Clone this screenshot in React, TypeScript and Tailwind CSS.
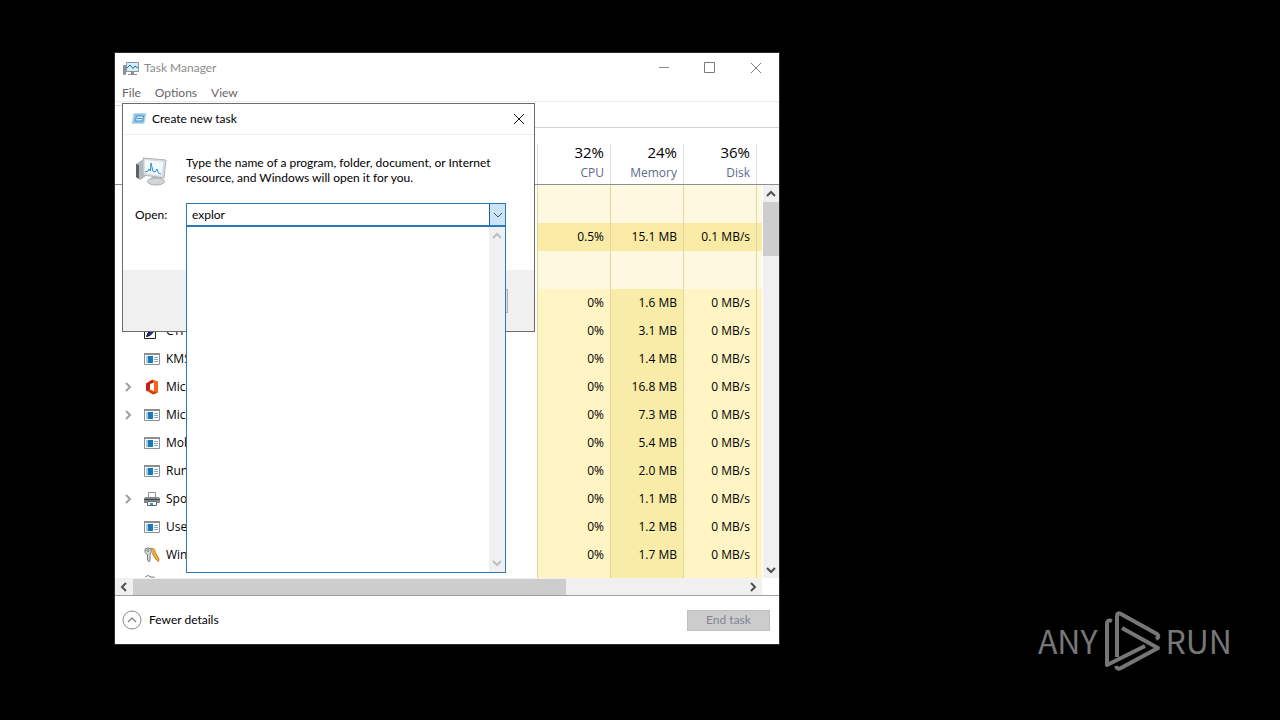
import React from 'react';
import { clsx } from 'clsx';

type IconKind = 'ctf' | 'app' | 'office' | 'printer' | 'keys' | 'keysTop' | 'none';

interface Process {
  name: string;
  icon: IconKind;
  expandable?: boolean;
  cpu: string;
  memory: string;
  disk: string;
}

const processes: Process[] = [
  { name: '', icon: 'none', cpu: '0%', memory: '1.6 MB', disk: '0 MB/s' },
  { name: 'CTF', icon: 'ctf', cpu: '0%', memory: '3.1 MB', disk: '0 MB/s' },
  { name: 'KMS', icon: 'app', cpu: '0%', memory: '1.4 MB', disk: '0 MB/s' },
  { name: 'Mic', icon: 'office', expandable: true, cpu: '0%', memory: '16.8 MB', disk: '0 MB/s' },
  { name: 'Mic', icon: 'app', expandable: true, cpu: '0%', memory: '7.3 MB', disk: '0 MB/s' },
  { name: 'Mob', icon: 'app', cpu: '0%', memory: '5.4 MB', disk: '0 MB/s' },
  { name: 'Run', icon: 'app', cpu: '0%', memory: '2.0 MB', disk: '0 MB/s' },
  { name: 'Spo', icon: 'printer', expandable: true, cpu: '0%', memory: '1.1 MB', disk: '0 MB/s' },
  { name: 'Use', icon: 'app', cpu: '0%', memory: '1.2 MB', disk: '0 MB/s' },
  { name: 'Win', icon: 'keys', cpu: '0%', memory: '1.7 MB', disk: '0 MB/s' },
  { name: '', icon: 'keysTop', cpu: '', memory: '', disk: '' },
];

const columns = [
  { label: 'CPU', value: '32%' },
  { label: 'Memory', value: '24%' },
  { label: 'Disk', value: '36%' },
];

const chevronPaths = {
  up: 'M1 7 L5 3 L9 7',
  down: 'M1 3 L5 7 L9 3',
  left: 'M7 1 L3 5 L7 9',
  right: 'M3 1 L7 5 L3 9',
};

const Chevron: React.FC<{ dir: keyof typeof chevronPaths; color?: string; width?: number }> = ({
  dir,
  color = '#505050',
  width = 2,
}) => (
  <svg width="10" height="10" viewBox="0 0 10 10" fill="none" stroke={color} strokeWidth={width}>
    <path d={chevronPaths[dir]} />
  </svg>
);

const ProcessIcon: React.FC<{ kind: IconKind }> = ({ kind }) => {
  switch (kind) {
    case 'app':
      return (
        <svg width="16" height="16" viewBox="0 0 16 16">
          <path d="M0.5 2.5h15v11h-15z" fill="#fff" stroke="#8a8f94" />
          <path d="M0 2h16v2H0z" fill="#8a8f94" />
          <path d="M2 5h2v7H2z" fill="#a9cbe4" />
          <path d="M4 5h5v7H4z" fill="#1979b8" />
          <path d="M10 6h4v1h-4zM10 8h4v1h-4zM10 10h4v1h-4z" fill="#7fa6c4" />
        </svg>
      );
    case 'office':
      return (
        <svg width="16" height="16" viewBox="0 0 16 16">
          <path d="M2 4.5 L8.5 0.5 L10 3.5 L6 5 V10.5 L4 12.5 L2 11.5 Z" fill="#c8200c" />
          <path d="M8.5 0.5 L14 2.5 V13.5 L9 15.5 L10 12.5 V3.5 Z" fill="#f5631a" />
          <path d="M4 12.5 L6 10.5 L10 12.5 L13.5 13.5 L9 15.5 Z" fill="#d83b01" />
        </svg>
      );
    case 'printer':
      return (
        <svg width="16" height="16" viewBox="0 0 16 16">
          <path d="M4.5 1.5h7v5h-7z" fill="#fff" stroke="#8d9196" />
          <path d="M1 6h14l1 2v4H0V8z" fill="#858a8f" />
          <path d="M0 8h16v1H0z" fill="#3e4347" />
          <path d="M3.5 10.5h9v4h-9z" fill="#f4f6f8" stroke="#666" />
          <path d="M6 12h3v2H6z" fill="#3c93bc" />
          <path d="M13 7h1v1h-1z" fill="#6fe08a" />
        </svg>
      );
    case 'keys':
      return (
        <svg width="16" height="16" viewBox="0 0 16 16" fill="none">
          <path d="M7 1.5 Q11 1 11 5 L15 12 L14.5 14.5 L12.5 13 L8 6" fill="#f0b03c" stroke="#c47a1c" />
          <path d="M1 2 Q4 -0.5 7 2 Q8 5 6 7.5 V13 L5 15 L3.5 13 V8 Q0 6 1 2 Z" fill="#d3d8dd" stroke="#7d8185" />
          <circle cx="4" cy="3.5" r="1" fill="#fff" stroke="#777" />
        </svg>
      );
    case 'keysTop':
      return (
        <svg width="16" height="16" viewBox="0 0 16 16" fill="none">
          <path d="M1 2 Q4 -1 7 2 M6 2h4v2H6" stroke="#8d8474" />
        </svg>
      );
    case 'ctf':
      return (
        <svg width="16" height="16" viewBox="0 0 16 16">
          <path d="M0.5 2.5h11v13h-11z" fill="#fff" stroke="#222" />
          <path d="M2.5 13.5 L4 10 L13 2 L12 6 L6 12.5 Z" fill="#22309a" stroke="#111" />
        </svg>
      );
    default:
      return null;
  }
};

const MonitorIcon: React.FC<{ size: number }> = ({ size }) => (
  <svg width={size} height={size} viewBox="0 0 32 32">
    <path d="M1 9 L7 5 L10 6 V22 L5 25 L1 22 Z" fill="#b5b9bc" />
    <path d="M1 9 L4 10 V24 L1 22 Z" fill="#5d6266" />
    <path d="M8 3 L31 5 L29 23 L8 20 Z" fill="#dcdee0" stroke="#b0b3b6" />
    <path d="M10 5 L28 7 L26.5 20.5 L10 18 Z" fill="#f2faff" />
    <path
      d="M10 17 L13 16 L14 14 L15.5 16 L16 8 L18 16.5 L20 17 L22 14 L23.5 18 L26 19"
      fill="none"
      stroke="#2b8fce"
    />
    <path d="M17 21 L24 22 L23 26 L16 25 Z" fill="#b7bbbf" />
    <ellipse cx="21" cy="26.5" rx="8.5" ry="3.5" fill="#d3d6d9" stroke="#a8acb0" />
  </svg>
);

const TitleIcon = () => (
  <svg width="16" height="16" viewBox="0 0 16 16">
    <path d="M0.5 5.5h2v9h-2z" fill="#8a9096" stroke="#8a9096" />
    <path d="M3.5 2.5h12v9h-12z" fill="#d6edfa" stroke="#8796a2" />
    <path d="M4 8 L7 5 L10 8.5 L12 6 L15 8" fill="none" stroke="#1d6fa5" />
    <path d="M8 12h3v2H8zM5 14h9v1H5z" fill="#8a9096" />
  </svg>
);

const RunIcon = () => (
  <svg width="16" height="16" viewBox="0 0 16 16">
    <path d="M3 2.5 H15 L13 12.5 H1 Z" fill="#8cc4ea" stroke="#b7dbf2" />
    <path d="M5.5 5 H12.5 L11.5 10 H4.5 Z" fill="#d9effc" stroke="#4a92c6" />
    <path d="M6 7.5h5" stroke="#4a92c6" />
  </svg>
);

const CloseIcon: React.FC<{ color: string }> = ({ color }) => (
  <svg width="10" height="10" viewBox="0 0 10 10" stroke={color}>
    <path d="M0 0 L10 10 M10 0 L0 10" />
  </svg>
);

const valueCell = 'border-l border-[#e0d79c] p-0 pr-1.5 text-right';

const GroupRow = () => (
  <tr className="h-[38px] bg-[#fff8e1]">
    <td className="bg-white p-0" />
    <td className={valueCell} />
    <td className={valueCell} />
    <td className={valueCell} />
    <td className="border-l border-[#e0d79c] p-0" />
  </tr>
);

const ProcessTable = () => (
  <table className="w-full table-fixed border-separate border-spacing-0 font-['Open_Sans',sans-serif]">
    <colgroup>
      <col />
      <col className="w-[73px]" />
      <col className="w-[73px]" />
      <col className="w-[73px]" />
      <col className="w-[6px]" />
    </colgroup>
    <tbody>
      <GroupRow />
      <tr className="h-7 bg-[#f9eba6]">
        <td className="bg-white p-0" />
        <td className={valueCell}>0.5%</td>
        <td className={valueCell}>15.1 MB</td>
        <td className={valueCell}>0.1 MB/s</td>
        <td className="border-l border-[#e0d79c] p-0" />
      </tr>
      <GroupRow />
      {processes.map((process, index) => (
        <tr key={index} className="h-7 bg-[#fff4c4]">
          <td className="bg-white p-0">
            <div className="flex items-center pl-2">
              <span className="w-[21px]">
                {process.expandable && <Chevron dir="right" color="#a0a0a0" />}
              </span>
              <span className="w-[22px]">
                <ProcessIcon kind={process.icon} />
              </span>
              <span>{process.name}</span>
            </div>
          </td>
          <td className={valueCell}>{process.cpu}</td>
          <td className={clsx(valueCell, 'bg-[#f9eca8]')}>{process.memory}</td>
          <td className={valueCell}>{process.disk}</td>
          <td className="border-l border-[#e0d79c] p-0" />
        </tr>
      ))}
    </tbody>
  </table>
);

const TaskManager = () => (
  <section className="absolute top-[53px] left-[115px] w-[664px] bg-white outline outline-[#2b2b2b]">
    <header className="flex h-[30px] items-center pl-2 text-[#8c8c8c]">
      <TitleIcon />
      <h1 className="flex-1 pl-[5px]">Task Manager</h1>
      <button aria-label="Minimize" className="flex h-full w-[46px] items-center justify-center">
        <svg width="10" height="10" viewBox="0 0 10 10">
          <path d="M0 4h10v1H0z" fill="#8c8c8c" />
        </svg>
      </button>
      <button aria-label="Maximize" className="flex h-full w-[46px] items-center justify-center">
        <svg width="12" height="12" viewBox="0 0 12 12" fill="none" stroke="#7c7c7c">
          <path d="M0.5 0.5h10v10h-10z" />
        </svg>
      </button>
      <button aria-label="Close" className="flex h-full w-[46px] items-center justify-center">
        <CloseIcon color="#7c7c7c" />
      </button>
    </header>

    <nav className="flex h-[18px] items-end gap-3.5 pl-[7px] text-[#666666]">
      <button>File</button>
      <button>Options</button>
      <button>View</button>
    </nav>

    <div className="flex h-[27px] items-end border-y border-t-[#ececec] border-b-[#d4d4d4]">
      <div className="-mb-px h-[23px] w-16 border-t border-[#dcdcdc] bg-white" />
    </div>

    <div className="flex h-[57px] items-end justify-end border-b border-[#8f8f8f] pr-4 font-['Open_Sans',sans-serif]">
      {columns.map((column) => (
        <div
          key={column.label}
          className="flex h-10 w-[73px] flex-col items-end border-l border-[#dcdfe4] pr-1.5"
        >
          <span className="text-[15px] leading-4 text-black">{column.value}</span>
          <span className="pt-[5px] text-[#5c6b8c]">{column.label}</span>
        </div>
      ))}
      <div className="h-10 w-[7px] border-l border-[#dcdfe4]" />
    </div>

    <div className="flex h-[393px]">
      <div className="mr-px h-full flex-1 overflow-hidden">
        <ProcessTable />
      </div>
      <div className="flex w-4 flex-col items-center bg-[#f0f0f0]">
        <button aria-label="Scroll up" className="flex h-[17px] items-center">
          <Chevron dir="up" />
        </button>
        <div className="h-[54px] w-full bg-[#cdcdcd]" />
        <div className="flex-1" />
        <button aria-label="Scroll down" className="flex h-[17px] items-center">
          <Chevron dir="down" />
        </button>
      </div>
    </div>

    <div className="border-b border-[#a0a0a0] pr-[17px]">
      <div className="flex h-[17px] items-center bg-[#f0f0f0]">
        <button aria-label="Scroll left" className="flex w-[18px] justify-center">
          <Chevron dir="left" />
        </button>
        <div className="h-4 w-[433px] bg-[#cdcdcd]" />
        <div className="flex-1" />
        <button aria-label="Scroll right" className="flex w-[18px] justify-center">
          <Chevron dir="right" />
        </button>
      </div>
    </div>

    <footer className="flex h-12 items-center justify-between pr-[9px] pl-[7px]">
      <button className="flex items-center gap-[7px]">
        <svg width="20" height="20" viewBox="0 0 20 20" fill="none" stroke="#8a8a8a">
          <circle cx="10" cy="10" r="9" />
          <path d="M6 12 L10 8 L14 12" strokeWidth="1.5" />
        </svg>
        Fewer details
      </button>
      <button disabled className="h-[21px] w-[83px] border border-[#bfbfbf] bg-[#cccccc] text-[#838393]">
        End task
      </button>
    </footer>
  </section>
);

const CreateTaskDialog = () => (
  <section className="absolute top-[103px] left-[122px] w-[413px] border border-[#6b6b6b] bg-white">
    <header className="flex h-[31px] items-center border-b border-[#ededed] pl-2">
      <RunIcon />
      <h2 className="flex-1 pl-[5px]">Create new task</h2>
      <button aria-label="Close dialog" className="flex h-full w-[31px] items-center justify-center">
        <CloseIcon color="#111111" />
      </button>
    </header>

    <div className="h-[135px] px-3">
      <div className="flex pt-5">
        <div className="w-[51px]">
          <MonitorIcon size={32} />
        </div>
        <p className="leading-[15px]">
          Type the name of a program, folder, document, or Internet
          <br />
          resource, and Windows will open it for you.
        </p>
      </div>
      <div className="flex items-center pt-4">
        <label htmlFor="open" className="w-[51px]">
          Open:
        </label>
        <div className="relative w-80">
          <div className="flex h-6 border border-[#2a7ab8]">
            <input id="open" type="text" defaultValue="explor" className="min-w-0 flex-1 px-[5px] outline-none" />
            <button
              aria-label="Show history"
              className="flex w-4 items-center justify-center border-l border-[#1f5f96] bg-[#cce4f7]"
            >
              <Chevron dir="down" width={1} />
            </button>
          </div>
          <div className="absolute top-[22px] left-0 flex h-[348px] w-full justify-end border border-t-2 border-[#2a7ab8] bg-white">
            <div className="flex w-4 flex-col items-center justify-between bg-[#f0f0f0] py-1">
              <Chevron dir="up" color="#bfbfbf" />
              <Chevron dir="down" color="#bfbfbf" />
            </div>
          </div>
        </div>
      </div>
    </div>

    <footer className="flex h-[61px] items-center justify-end bg-[#f0f0f0] pr-[26px]">
      <button aria-label="Browse" className="h-6 w-[75px] border border-[#adadad] bg-[#e1e1e1]" />
    </footer>
  </section>
);

const Watermark = () => (
  <div className="absolute right-12 bottom-12 flex items-center gap-1 font-['Noto_Sans_CJK_SC',sans-serif] text-[32px] text-[#777777]">
    <span>ANY</span>
    <svg width="60" height="64" viewBox="0 0 60 64" fill="none" stroke="#777777" strokeWidth="4" strokeLinejoin="round">
      <path d="M16 49 V8 Q16 4 20 6 L56 26 Q59 29 55 31" />
      <path d="M21 20 L57 40 L20 60 Q16 62 15 58" />
      <path d="M11 13 Q6 11 6 16 V57 L44 38" />
    </svg>
    <span>RUN</span>
  </div>
);

const App: React.FC = () => {
  return (
    <main className="relative min-h-screen overflow-hidden bg-black font-['Lato',sans-serif] text-[12px] leading-4 text-black">
      <TaskManager />
      <CreateTaskDialog />
      <Watermark />
    </main>
  );
};

export default App;
